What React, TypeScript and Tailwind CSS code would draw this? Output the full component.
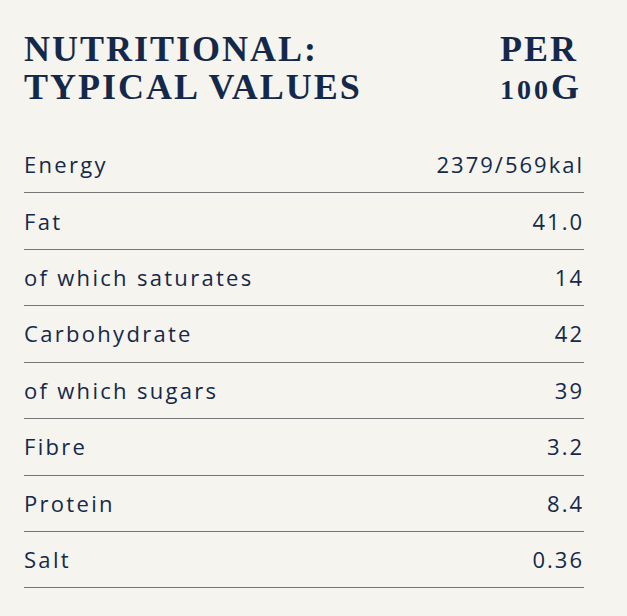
import React from "react";

const rows: [string, string][] = [
  ["Energy", "2379/569kal"],
  ["Fat", "41.0"],
  ["of which saturates", "14"],
  ["Carbohydrate", "42"],
  ["of which sugars", "39"],
  ["Fibre", "3.2"],
  ["Protein", "8.4"],
  ["Salt", "0.36"],
];

export default function App() {
  return (
    <div className="w-[627px] h-[616px] bg-[#f6f4ef] px-[24px] pt-[30px] text-[#14294a]">
      <div className="w-[560px]">
        <div
          className="flex justify-between h-[107px] text-[36px] leading-[38px] font-bold tracking-[2px]"
          style={{ fontFamily: '"Liberation Serif", serif' }}
        >
          <div>
            NUTRITIONAL:
            <br />
            TYPICAL VALUES
          </div>
          <div className="w-[84px]">
            PER
            <br />
            <span className="text-[28px] tracking-[3px]">100</span>G
          </div>
        </div>
        <div style={{ fontFamily: '"Open Sans", sans-serif' }}>
          {rows.map(([k, v]) => (
            <div
              key={k}
              className="flex justify-between items-center h-[56.43px] border-b border-[#757575] text-[22px] tracking-[2.3px]"
            >
              <span>{k}</span>
              <span className="tracking-[2px]">{v}</span>
            </div>
          ))}
        </div>
      </div>
    </div>
  );
}
